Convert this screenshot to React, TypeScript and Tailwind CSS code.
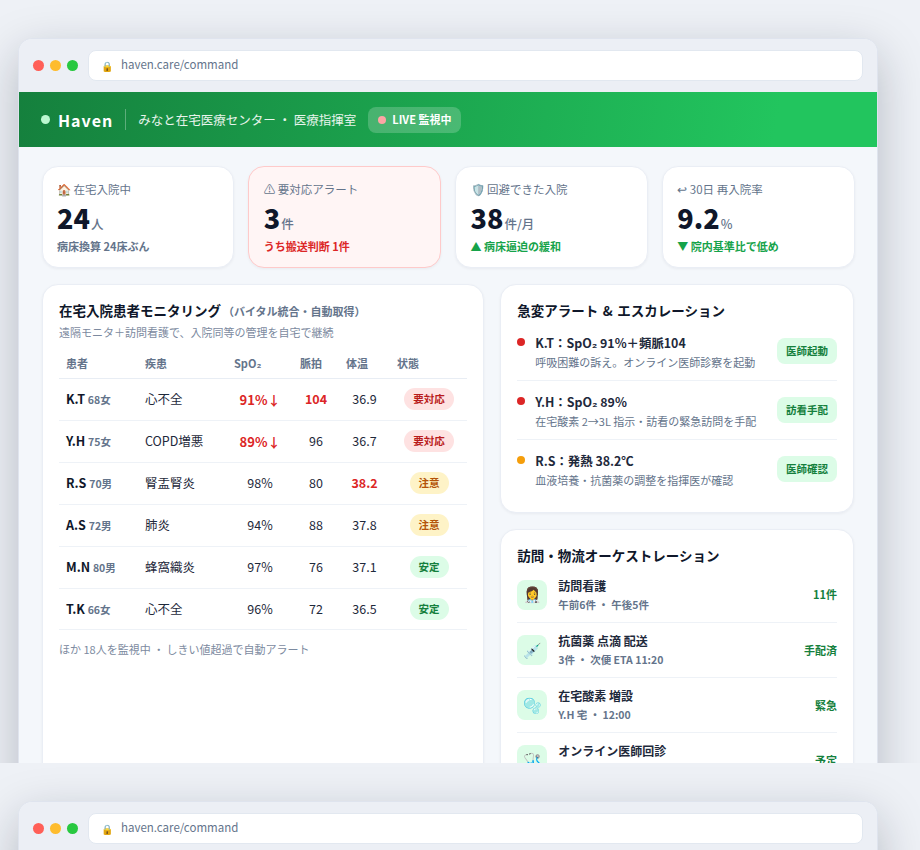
import type { ReactNode } from "react";

const kpis = [
  { label: "🏠 在宅入院中", value: "24", unit: "人", note: "病床換算 24床ぶん", noteClass: "text-[#64748b]" },
  { label: "⚠ 要対応アラート", value: "3", unit: "件", note: "うち搬送判断 1件", noteClass: "text-[#dc2626]", alert: true },
  { label: "🛡️ 回避できた入院", value: "38", unit: "件/月", note: "▲ 病床逼迫の緩和", noteClass: "text-[#16a34a]" },
  { label: "↩ 30日 再入院率", value: "9.2", unit: "%", note: "▼ 院内基準比で低め", noteClass: "text-[#16a34a]" },
];

const badgeClass = {
  red: "bg-[#fee2e2] text-[#b91c1c]",
  amber: "bg-[#fef3c7] text-[#b45309]",
  green: "bg-[#dcfce7] text-[#15803d]",
};

type Patient = {
  id: string;
  meta: string;
  disease: string;
  spo2: string;
  pulse: string;
  temp: string;
  status: string;
  tone: keyof typeof badgeClass;
  hot?: ("spo2" | "pulse" | "temp")[];
};

const patients: Patient[] = [
  { id: "K.T", meta: "68女", disease: "心不全", spo2: "91%↓", pulse: "104", temp: "36.9", status: "要対応", tone: "red", hot: ["spo2", "pulse"] },
  { id: "Y.H", meta: "75女", disease: "COPD増悪", spo2: "89%↓", pulse: "96", temp: "36.7", status: "要対応", tone: "red", hot: ["spo2"] },
  { id: "R.S", meta: "70男", disease: "腎盂腎炎", spo2: "98%", pulse: "80", temp: "38.2", status: "注意", tone: "amber", hot: ["temp"] },
  { id: "A.S", meta: "72男", disease: "肺炎", spo2: "94%", pulse: "88", temp: "37.8", status: "注意", tone: "amber" },
  { id: "M.N", meta: "80男", disease: "蜂窩織炎", spo2: "97%", pulse: "76", temp: "37.1", status: "安定", tone: "green" },
  { id: "T.K", meta: "66女", disease: "心不全", spo2: "96%", pulse: "72", temp: "36.5", status: "安定", tone: "green" },
];

const alerts = [
  { title: "K.T：SpO₂ 91%＋頻脈104", desc: "呼吸困難の訴え。オンライン医師診察を起動", action: "医師起動", dot: "bg-[#dc2626]" },
  { title: "Y.H：SpO₂ 89%", desc: "在宅酸素 2→3L 指示・訪看の緊急訪問を手配", action: "訪看手配", dot: "bg-[#dc2626]" },
  { title: "R.S：発熱 38.2℃", desc: "血液培養・抗菌薬の調整を指揮医が確認", action: "医師確認", dot: "bg-[#f59e0b]" },
];

const logistics = [
  { icon: "👩‍⚕️", title: "訪問看護", sub: "午前6件 ・ 午後5件", state: "11件" },
  { icon: "💉", title: "抗菌薬 点滴 配送", sub: "3件 ・ 次便 ETA 11:20", state: "手配済" },
  { icon: "🫧", title: "在宅酸素 増設", sub: "Y.H 宅 ・ 12:00", state: "緊急" },
  { icon: "🩺", title: "オンライン医師回診", sub: "14:00 ・ 6名", state: "予定" },
];

function Panel({ children, className = "" }: { children: ReactNode; className?: string }) {
  return (
    <section className={`rounded-2xl border border-[#eaeef5] bg-white p-[16px] shadow-[0_1px_3px_rgba(15,23,42,0.05)] ${className}`}>
      {children}
    </section>
  );
}

function BrowserWindow() {
  return (
    <div className="w-[860px] overflow-hidden rounded-[14px] border border-[#dfe4ee] bg-[#f4f7fb] shadow-[0_16px_48px_rgba(15,23,42,0.25)]">
      <div className="flex h-[53px] items-center gap-[6px] bg-[#eceff5] px-[14px] pb-[1px]">
        <span className="h-[11px] w-[11px] rounded-full bg-[#ff5f57]" />
        <span className="h-[11px] w-[11px] rounded-full bg-[#febc2e]" />
        <span className="h-[11px] w-[11px] rounded-full bg-[#28c840]" />
        <div className="ml-[4px] flex h-[31px] flex-1 items-center gap-[8px] rounded-lg border border-[#e2e8f0] bg-white pl-[12px] text-[11.5px] text-[#64748b]">
          <span className="text-[10px]">🔒</span>
          <span>haven.care/command</span>
        </div>
      </div>

      <header className="flex h-[55px] items-center bg-[linear-gradient(100deg,#15803d,#22c55e_88%)] pl-[22px] text-white">
        <span className="h-[9px] w-[9px] rounded-full bg-[#bbf7d0]" />
        <span className="ml-[8px] text-[16px] font-bold tracking-[1px]">Haven</span>
        <span className="ml-[12px] h-[21px] w-px bg-white/30" />
        <span className="ml-[12px] mt-[2px] text-[12.5px] text-white/90">みなと在宅医療センター ・ 医療指揮室</span>
        <span className="ml-[12px] flex h-[26px] items-center gap-[6px] rounded-lg bg-white/20 px-[10px] text-[11px] font-bold">
          <span className="h-[8px] w-[8px] rounded-full bg-[#fca5a5]" />
          LIVE 監視中
        </span>
      </header>

      <main className="px-[23px] pt-[19px]">
        <div className="-mx-[0.5px] grid grid-cols-4 gap-[14px]">
          {kpis.map((kpi) => (
            <div
              key={kpi.label}
              className={`h-[102px] rounded-2xl border px-[14.5px] pt-[13px] shadow-[0_1px_3px_rgba(15,23,42,0.05)] ${
                kpi.alert ? "border-[#fecaca] bg-[#fff5f5]" : "border-[#eaeef5] bg-white"
              }`}
            >
              <div className="text-[11.5px] leading-[18px] text-[#64748b]">{kpi.label}</div>
              <div className="mt-[2px] flex items-baseline text-[#0f172a]">
                <span className="text-[27px] font-extrabold leading-[36px]">{kpi.value}</span>
                <span className="ml-px text-[12.5px] font-medium text-[#64748b]">{kpi.unit}</span>
              </div>
              <div className={`mt-[2px] text-[11px] font-bold leading-[16px] ${kpi.noteClass}`}>{kpi.note}</div>
            </div>
          ))}
        </div>

        <div className="mt-[16px] grid grid-cols-[1.25fr_1fr] items-start gap-[16px]">
          <Panel className="h-[640px]">
            <h2 className="text-[13.5px] font-bold leading-[18px] text-[#0f172a]">
              在宅入院患者モニタリング
              <span className="ml-[2px] text-[11px] font-bold text-[#64748b]">（バイタル統合・自動取得）</span>
            </h2>
            <p className="mt-[4px] text-[11px] leading-[16px] text-[#7c8aa0]">遠隔モニタ＋訪問看護で、入院同等の管理を自宅で継続</p>

            <table className="mt-[5px] w-full table-fixed border-collapse text-[12.5px] text-[#1e293b]">
              <colgroup>
                <col className="w-[78px]" />
                <col className="w-[89px]" />
                <col className="w-[66px]" />
                <col className="w-[46px]" />
                <col className="w-[51px]" />
                <col />
              </colgroup>
              <thead>
                <tr className="h-[33px] border-b border-[#e8edf4] text-left text-[11px] text-[#64748b]">
                  <th className="pl-[7px] pt-[3px] font-bold">患者</th>
                  <th className="pl-[8px] pt-[3px] font-bold">疾患</th>
                  <th className="pl-[8px] pt-[3px] font-bold">SpO₂</th>
                  <th className="pl-[8px] pt-[3px] font-bold">脈拍</th>
                  <th className="pl-[8px] pt-[3px] font-bold">体温</th>
                  <th className="pl-[8px] pt-[3px] font-bold">状態</th>
                </tr>
              </thead>
              <tbody>
                {patients.map((p, index) => (
                  <tr key={p.id} className={`border-b border-[#eef2f7] ${index === patients.length - 1 ? "h-[41px]" : "h-[42px]"}`}>
                    <td className="whitespace-nowrap pl-[7px] pt-[1px]">
                      <span className="text-[12.5px] font-bold text-[#0f172a]">{p.id}</span>{" "}
                      <span className="text-[10.5px] font-bold text-[#64748b]">{p.meta}</span>
                    </td>
                    <td className="whitespace-nowrap pl-[8px] pt-[1px]">{p.disease}</td>
                    <td className={`pl-[2px] pt-[1px] text-center ${p.hot?.includes("spo2") ? "text-[13px] font-bold text-[#dc2626]" : ""}`}>{p.spo2}</td>
                    <td className={`pl-[2px] pt-[1px] text-center ${p.hot?.includes("pulse") ? "font-bold text-[#dc2626]" : ""}`}>{p.pulse}</td>
                    <td className={`pl-[2px] pt-[1px] text-center ${p.hot?.includes("temp") ? "font-bold text-[#dc2626]" : ""}`}>{p.temp}</td>
                    <td className="pl-[2px] text-center">
                      <span className={`inline-block rounded-full px-[9px] py-[3px] text-[10.5px] font-bold leading-[16px] ${badgeClass[p.tone]}`}>
                        {p.status}
                      </span>
                    </td>
                  </tr>
                ))}
              </tbody>
            </table>
            <p className="mt-[11px] text-[11px] leading-[16px] text-[#7c8aa0]">ほか 18人を監視中 ・ しきい値超過で自動アラート</p>
          </Panel>

          <div className="flex flex-col gap-[16px]">
            <Panel className="pb-[14px]">
              <h2 className="text-[13.5px] font-bold leading-[18px] text-[#0f172a] [word-spacing:1.5px]">急変アラート & エスカレーション</h2>
              <ul className="mt-[2px]">
                {alerts.map((a, index) => (
                  <li
                    key={a.title}
                    className={`flex h-[59px] items-start ${index > 0 ? "border-t border-[#eef2f7] pt-[11px]" : "pt-[12px]"}`}
                  >
                    <span className={`mt-[5px] h-[8px] w-[8px] shrink-0 rounded-full ${a.dot}`} />
                    <div className="ml-[10px] min-w-0 flex-1">
                      <div className="text-[12.4px] font-bold leading-[20px] text-[#1e293b]">{a.title}</div>
                      <div className="text-[11px] leading-[18px] text-[#64748b]">{a.desc}</div>
                    </div>
                    <span className="mt-[5px] flex h-[26px] w-[60px] shrink-0 items-center justify-center rounded-lg bg-[#dcfce7] text-[10.5px] font-bold text-[#15803d]">
                      {a.action}
                    </span>
                  </li>
                ))}
              </ul>
            </Panel>

            <Panel>
              <h2 className="text-[13.5px] font-bold leading-[18px] text-[#0f172a]">訪問・物流オーケストレーション</h2>
              <ul className="mt-[3px]">
                {logistics.map((item, index) => (
                  <li key={item.title} className={`flex h-[55px] items-center ${index > 0 ? "border-t border-[#eef2f7]" : ""}`}>
                    <span className="flex h-[30px] w-[30px] shrink-0 items-center justify-center rounded-lg bg-[#dcfce7] text-[15px]">
                      {item.icon}
                    </span>
                    <div className="ml-[11px] min-w-0 flex-1 pt-[1px]">
                      <div className="text-[12px] font-bold leading-[18px] text-[#1e293b]">{item.title}</div>
                      <div className="text-[10.5px] font-bold leading-[19px] text-[#64748b]">{item.sub}</div>
                    </div>
                    <span className="shrink-0 text-[11px] font-bold text-[#15803d]">{item.state}</span>
                  </li>
                ))}
              </ul>
            </Panel>
          </div>
        </div>
      </main>
    </div>
  );
}

export default function App() {
  return (
    <div className="min-h-screen bg-[#eef1f6] font-['Noto_Sans_CJK_JP',sans-serif]">
      {[0, 1].map((slide) => (
        <div key={slide} className="h-[763px] overflow-hidden pl-[18px] pt-[38px]">
          <BrowserWindow />
        </div>
      ))}
    </div>
  );
}
